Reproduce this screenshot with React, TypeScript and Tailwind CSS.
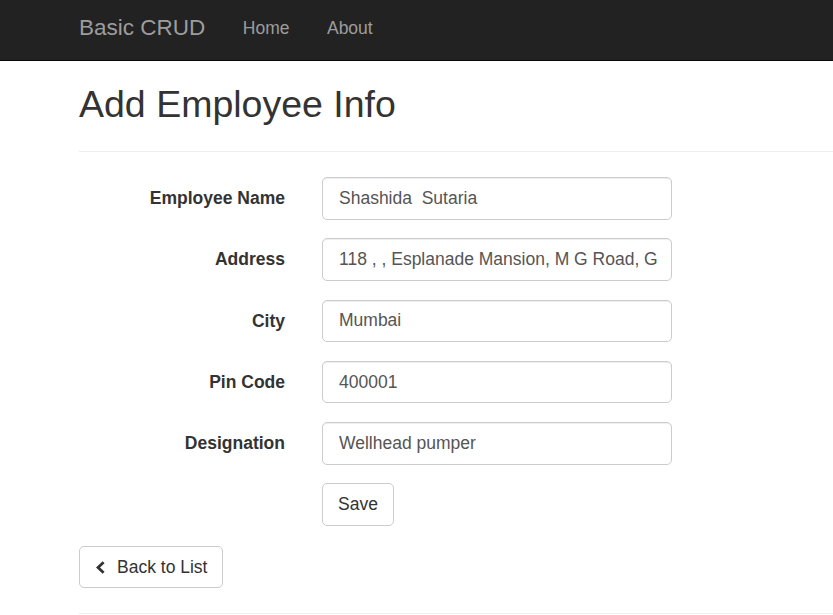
const fields = [
  { label: 'Employee Name', value: 'Shashida  Sutaria' },
  { label: 'Address', value: '118 , , Esplanade Mansion, M G Road, G' },
  { label: 'City', value: 'Mumbai' },
  { label: 'Pin Code', value: '400001' },
  { label: 'Designation', value: 'Wellhead pumper' },
];

const App = () => {
  return (
    <div className="w-[833px] h-[615px] overflow-hidden bg-white text-[#333] font-['Liberation_Sans',Arial,sans-serif]">
      {/* Navbar */}
      <nav className="h-[61px] bg-[#222] border-b border-[#080808] flex items-center pl-[79px] pb-[4px]">
        <span className="text-[22.5px] text-[#9d9d9d] mr-[37.5px]">Basic CRUD</span>
        <span className="text-[17.5px] text-[#9d9d9d] mr-[37.5px]">Home</span>
        <span className="text-[17.5px] text-[#9d9d9d]">About</span>
      </nav>

      <div className="pl-[79px]">
        <h2 className="mt-[22.5px] text-[37.5px] leading-[1.1] font-normal">Add Employee Info</h2>
        <hr className="mt-[26.25px] border-[#eee]" />

        {/* Form */}
        <div className="mt-[25px] flex flex-col gap-[18.75px]">
          {fields.map((f) => (
            <div key={f.label} className="flex items-center">
              <label className="w-[206px] text-right font-bold text-[17.5px]">{f.label}</label>
              <input
                readOnly
                value={f.value}
                className="ml-[37px] h-[42.5px] w-[350px] border border-[#ccc] rounded-[5px] pl-[16px] pr-[6px] text-[17.5px] text-[#555] bg-white shadow-[inset_0_1px_1px_rgba(0,0,0,0.075)] outline-none"
              />
            </div>
          ))}
          <div className="flex">
            <button className="ml-[243px] h-[42.5px] px-[15px] border border-[#ccc] rounded-[5px] bg-white text-[17.5px] text-[#333]">
              Save
            </button>
          </div>
        </div>

        <div className="mt-[20.25px] flex">
          <button className="h-[42px] px-[15px] border border-[#ccc] rounded-[5px] bg-white text-[17.5px] text-[#333] flex items-center">
            <svg width="9" height="13" viewBox="0 0 9 13" className="ml-[1px] mr-[12px]">
              <polyline points="7.6,1.2 2,6.5 7.6,11.8" fill="none" stroke="#333" strokeWidth="2.8" />
            </svg>
            Back to List
          </button>
        </div>

        <hr className="mt-[25px] border-[#eee]" />
      </div>
    </div>
  );
};

export default App;
